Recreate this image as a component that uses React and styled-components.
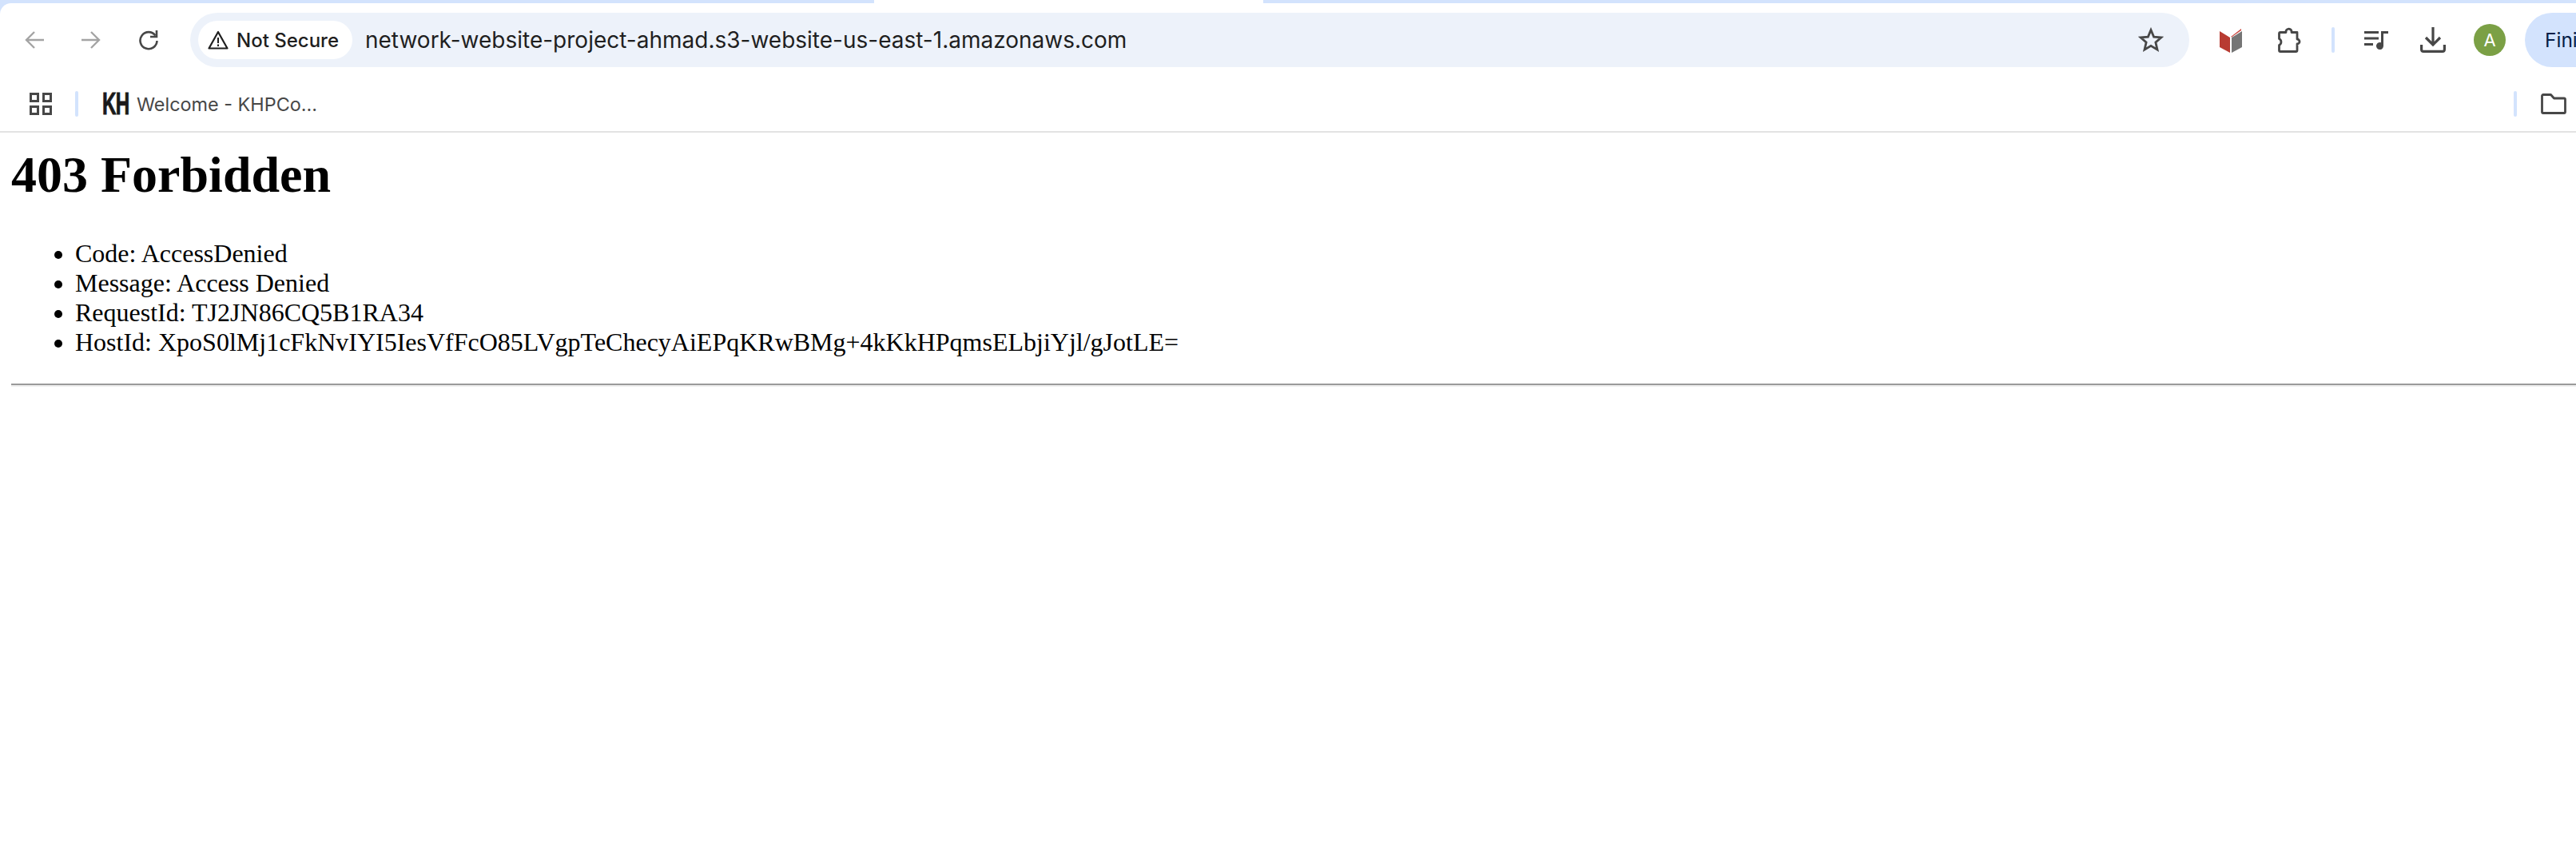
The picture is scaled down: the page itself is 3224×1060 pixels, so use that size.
import React from "react";
import styled, { createGlobalStyle } from "styled-components";

const Global = createGlobalStyle`
  html, body { margin: 0; padding: 0; background: #fff; overflow: hidden; }
  body { width: 3224px; height: 1060px; font-family: "Liberation Serif", serif; color: #000; }
`;

const Shell = styled.div`display: flex; flex-direction: column; width: 3224px; height: 1060px; overflow: hidden;`;
const Chrome = styled.header`background: #d3e3fd; flex: none;`;
const TabStrip = styled.div`display: flex; height: 4px;`;
const StripPiece = styled.div`height: 4px; background: #d3e3fd; flex: ${p => p.$grow ? "1" : "none"}; width: ${p => p.$w ? p.$w + "px" : "auto"}; border-radius: ${p => p.$r || "0"};`;
const ActiveTab = styled.div`height: 4px; width: 487px; background: #fff; flex: none;`;
const Toolbar = styled.div`display: flex; align-items: center; height: 92px; padding: 0 0 0 30px; background: #fff; border-radius: 14px 0 0 0; box-sizing: border-box;`;
const NavButton = styled.span`display: flex; width: ${p => p.$w}px; margin-right: ${p => p.$mr}px; color: ${p => p.$c}; flex: none;`;
const Omnibox = styled.div`display: flex; align-items: center; width: 2502px; height: 68px; box-sizing: border-box; padding: 0 32px 0 10px; border-radius: 34px; background: #edf2fa; flex: none; margin-left: 39px;`;
const SecurityChip = styled.div`display: flex; align-items: center; gap: 9px; height: 48px; width: 193px; box-sizing: border-box; padding-left: 11px; border-radius: 24px; background: #fff; font: 500 24px "Inter", sans-serif; color: #1f1f1f; flex: none;`;
const Url = styled.div`flex: 1; margin-left: 16px; font: 400 28px "Inter", sans-serif; color: #1f1f1f; white-space: nowrap;`;
const ToolIcon = styled.span`display: flex; flex: none; margin-left: ${p => p.$ml}px; color: #474747;`;
const VDivider = styled.span`display: block; width: 4px; height: 32px; border-radius: 2px; background: #d3e3fd; flex: none; margin-left: ${p => p.$ml}px;`;
const Avatar = styled.span`display: flex; align-items: center; justify-content: center; width: 40px; height: 40px; border-radius: 50%; background: #7ba045; color: #fff; font: 400 22px "Inter", sans-serif; flex: none; margin-left: 35px;`;
const FinishPill = styled.div`height: 68px; flex: 1; margin-left: 24px; border-radius: 34px 0 0 34px; background: #d3e3fd; color: #041e49; font: 400 24.5px "Inter", sans-serif; line-height: 68px; padding-left: 25px; white-space: nowrap;`;
const BookmarkBar = styled.div`display: flex; align-items: center; height: 68px; padding: 0 12px 0 37px; background: #fff; box-sizing: border-box;`;
const KhLogo = styled.span`display: block; width: 30px; height: 30px; margin-left: 30px; font: 700 39px/30px "Liberation Sans", sans-serif; color: #1a1a1a; transform: scaleX(.62); transform-origin: left center; flex: none; white-space: nowrap; letter-spacing: -1px; -webkit-text-stroke: 1px #1a1a1a;`;
const BookmarkLabel = styled.span`margin-left: 13px; font: 400 23.4px "Inter", sans-serif; color: #474747; white-space: nowrap;`;
const Spacer = styled.div`flex: 1;`;
const ChromeRule = styled.div`height: 2px; background: #e3e3e3; flex: none;`;

const Page = styled.main`padding: 0 0 0 14px; flex: 1;`;
const Title = styled.h1`margin: 16px 0 0; font: 700 64px/74px "Liberation Serif", serif;`;
const List = styled.ul`margin: 43px 0 0; padding: 0 0 0 80px; list-style: disc; font: 400 32px/37px "Liberation Serif", serif;`;
const Rule = styled.hr`margin: 33px 0 0; border: none; border-bottom: 2px solid #eee; border-top: 2px solid #9a9a9a; box-sizing: content-box; height: 0;`;

const Arrow = ({ dir }) => (
  <svg width="26" height="24" viewBox="0 0 26 24" fill="none" stroke="currentColor" strokeWidth="2.4" style={dir === "r" ? { transform: "scaleX(-1)" } : undefined}>
    <path d="M25 12H3M13 2L3 12l10 10" />
  </svg>
);

export default function App() {
  return (
    <Shell>
      <Global />
      <Chrome>
        <TabStrip>
          <StripPiece $w={1094} $r="0 0 12px 0" />
          <ActiveTab />
          <StripPiece $grow $r="0 0 0 12px" />
        </TabStrip>
        <Toolbar>
          <NavButton $w={26} $mr={45} $c="#a4a4a4"><Arrow /></NavButton>
          <NavButton $w={26} $mr={46} $c="#a4a4a4"><Arrow dir="r" /></NavButton>
          <NavButton $w={26} $mr={0} $c="#474747">
            <svg width="26" height="30" viewBox="0 0 26 30" fill="none" stroke="currentColor" strokeWidth="2.6">
              <path d="M21.500 9.500A10.500 10.500 0 1 0 23.500 16" />
              <path d="M23 3v8h-8" />
            </svg>
          </NavButton>
          <Omnibox>
            <SecurityChip>
              <svg width="28" height="26" viewBox="0 0 28 26" fill="none" stroke="#1f1f1f" strokeWidth="2.200">
                <path d="M14 3L2.500 23.500h23z" strokeLinejoin="round" />
                <path d="M14 10v7M14 18.500v2.500" strokeWidth="2" />
              </svg>
              Not Secure
            </SecurityChip>
            <Url>network-website-project-ahmad.s3-website-us-east-1.amazonaws.com</Url>
            <svg width="32" height="32" viewBox="0 0 32 32" fill="none" stroke="#474747" strokeWidth="2.800">
              <path d="M16 3.500l3.600 8.600 9.300.8-7 6.100 2.100 9.100-8-4.800-8 4.800 2.100-9.100-7-6.100 9.300-.8z" />
            </svg>
          </Omnibox>
          <ToolIcon $ml={38}>
            <svg width="28" height="32" viewBox="0 0 28 32">
              <path d="M0 5l13 8v19L0 25z" fill="#b83b32" />
              <path d="M15 13l13-8v20l-13 7z" fill="#757575" />
              <path d="M14 12L27 2v2L15 12.500z" fill="#c9423a" />
            </svg>
          </ToolIcon>
          <ToolIcon $ml={45}>
            <svg width="30" height="32" viewBox="0 0 30 32" fill="none" stroke="#474747" strokeWidth="2.800" strokeLinejoin="round">
              <path d="M3 6.500h7a3.500 3.500 0 0 1 7-1.500v1.500h7v8.500a3 3 0 0 1 0 6V29a1.500 1.500 0 0 1-1.500 1.500H3A1.500 1.500 0 0 1 1.500 29v-6.500a4.500 4.500 0 0 0 0-8V8A1.500 1.500 0 0 1 3 6.500z" />
            </svg>
          </ToolIcon>
          <VDivider $ml={37} />
          <ToolIcon $ml={37}>
            <svg width="30" height="24" viewBox="0 0 30 24" fill="#474747">
              <path d="M0 1h18v3H0zM0 8.500h18v3H0zM0 16h11v3H0z" />
              <path d="M21 1h9v3h-6v15.500a4.500 4.500 0 1 1-3-4.200z" />
            </svg>
          </ToolIcon>
          <ToolIcon $ml={40}>
            <svg width="32" height="32" viewBox="0 0 32 32" fill="none" stroke="#474747" strokeWidth="3.200">
              <path d="M16 0v21M7 13l9 9 9-9" />
              <path d="M1.600 22v6a2.500 2.500 0 0 0 2.500 2.400h23.800a2.500 2.500 0 0 0 2.500-2.400v-6" />
            </svg>
          </ToolIcon>
          <Avatar>A</Avatar>
          <FinishPill>Fini</FinishPill>
        </Toolbar>
      </Chrome>
      <BookmarkBar>
        <svg width="28" height="28" viewBox="0 0 28 28" fill="none" stroke="#474747" strokeWidth="3">
          <path d="M1.500 1.500h9v9h-9zM17.500 1.500h9v9h-9zM1.500 17.500h9v9h-9zM17.500 17.500h9v9h-9z" />
        </svg>
        <VDivider $ml={29} />
        <KhLogo>KH</KhLogo>
        <BookmarkLabel>Welcome - KHPCo...</BookmarkLabel>
        <Spacer />
        <VDivider />
        <ToolIcon $ml={30}>
          <svg width="32" height="26" viewBox="0 0 32 26" fill="none" stroke="#474747" strokeWidth="2.800" strokeLinejoin="round">
            <path d="M1.500 3A1.500 1.500 0 0 1 3 1.500h9.500l4 4.500H29A1.500 1.500 0 0 1 30.500 7.500V23A1.500 1.500 0 0 1 29 24.500H3A1.500 1.500 0 0 1 1.500 23z" />
          </svg>
        </ToolIcon>
      </BookmarkBar>
      <ChromeRule />
      <Page>
        <Title>403 Forbidden</Title>
        <List>
          <li>Code: AccessDenied</li>
          <li>Message: Access Denied</li>
          <li>RequestId: TJ2JN86CQ5B1RA34</li>
          <li>HostId: XpoS0lMj1cFkNvIYI5IesVfFcO85LVgpTeChecyAiEPqKRwBMg+4kKkHPqmsELbjiYjl/gJotLE=</li>
        </List>
        <Rule />
      </Page>
    </Shell>
  );
}
